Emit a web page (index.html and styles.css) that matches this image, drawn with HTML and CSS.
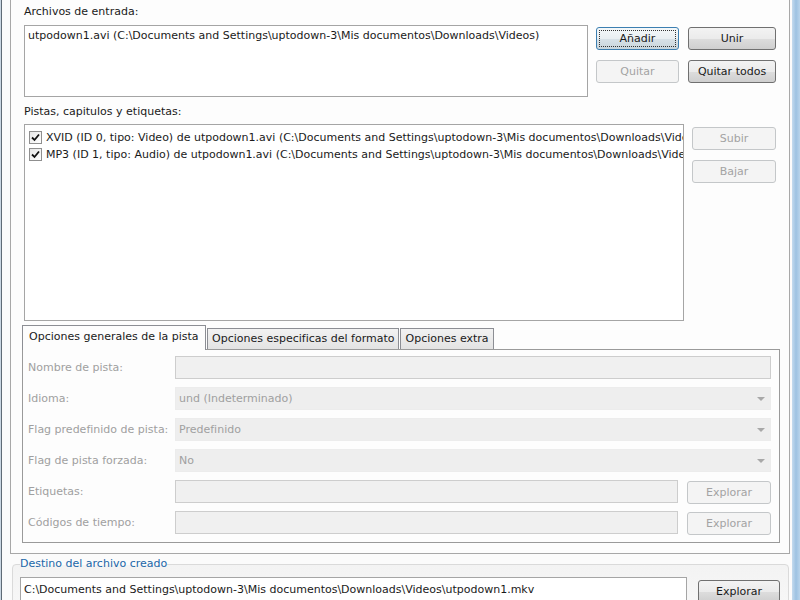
FILE: index.html
```html
<!DOCTYPE html>
<html lang="es">
  <head>
    <meta charset="UTF-8" />
    <title>mkvmerge GUI</title>
    <link rel="stylesheet" href="styles.css">
  </head>
  <body>
    <div class="window">
      <div class="page">
        <div class="section-label">Archivos de entrada:</div>
        <div class="files-row">
          <div class="listbox files">
            <div class="file-item">utpodown1.avi (C:\Documents and Settings\uptodown-3\Mis documentos\Downloads\Videos)</div>
          </div>
          <div class="btn-grid">
            <button class="btn focused">Añadir</button>
            <button class="btn">Unir</button>
            <button class="btn" disabled>Quitar</button>
            <button class="btn">Quitar todos</button>
          </div>
        </div>

        <div class="section-label second">Pistas, capitulos y etiquetas:</div>
        <div class="tracks-row">
          <div class="listbox tracks">
            <div class="track">
              <span class="check"><svg width="9" height="9" viewBox="0 0 9 9"><path d="M1 4.5 L3.5 7 L8 1.5" fill="none" stroke="#111" stroke-width="1.8"/></svg></span>
              XVID (ID 0, tipo: Video) de utpodown1.avi (C:\Documents and Settings\uptodown-3\Mis documentos\Downloads\Videos)
            </div>
            <div class="track">
              <span class="check"><svg width="9" height="9" viewBox="0 0 9 9"><path d="M1 4.5 L3.5 7 L8 1.5" fill="none" stroke="#111" stroke-width="1.8"/></svg></span>
              MP3 (ID 1, tipo: Audio) de utpodown1.avi (C:\Documents and Settings\uptodown-3\Mis documentos\Downloads\Videos)
            </div>
          </div>
          <div class="btn-col">
            <button class="btn" disabled>Subir</button>
            <button class="btn" disabled>Bajar</button>
          </div>
        </div>

        <div class="tabs">
          <div class="tab-bar">
            <div class="tab active">Opciones generales de la pista</div>
            <div class="tab">Opciones especificas del formato</div>
            <div class="tab">Opciones extra</div>
          </div>
          <div class="tab-panel">
            <div class="opt-label">Nombre de pista:</div>
            <div class="field"></div>

            <div class="opt-label">Idioma:</div>
            <div class="field select">und (Indeterminado)<span class="arrow"></span></div>

            <div class="opt-label">Flag predefinido de pista:</div>
            <div class="field select">Predefinido<span class="arrow"></span></div>

            <div class="opt-label">Flag de pista forzada:</div>
            <div class="field select">No<span class="arrow"></span></div>

            <div class="opt-label">Etiquetas:</div>
            <div class="field-row">
              <div class="field"></div>
              <button class="btn" disabled>Explorar</button>
            </div>

            <div class="opt-label">Códigos de tiempo:</div>
            <div class="field-row">
              <div class="field"></div>
              <button class="btn" disabled>Explorar</button>
            </div>
          </div>
        </div>
      </div>

      <fieldset class="dest">
        <legend>Destino del archivo creado</legend>
        <div class="dest-row">
          <div class="dest-input">C:\Documents and Settings\uptodown-3\Mis documentos\Downloads\Videos\utpodown1.mkv</div>
          <button class="btn">Explorar</button>
        </div>
      </fieldset>
    </div>
  </body>
</html>
```

FILE: styles.css
```css
* {
  box-sizing: border-box;
}
body {
  margin: 0;
  font-family: "DejaVu Sans", Verdana, sans-serif;
  font-size: 11px;
  color: #1a1a1a;
}
.window {
  width: 800px;
  height: 600px;
  overflow: hidden;
  padding: 0 11px 0 10px;
  background: linear-gradient(to right, #c9d6e2 0, #c9d6e2 1px, #5f6b76 1px, #5f6b76 2px, #fbfbfb 2px, #fbfbfb 792px, #c5dbee 792px, #9dc2e2 796px, #b9d4eb 800px);
}
.page {
  width: 780px;
  border: 1px solid #a8a8a8;
  border-top: none;
  padding: 5px 13px 10px 13px;
  background-color: #fdfdfd;
}
.section-label {
  line-height: 14px;
  margin-bottom: 6px;
}
.section-label.second {
  margin-top: 8px;
  margin-bottom: 5px;
}
.files-row {
  display: flex;
  gap: 8px;
}
.listbox {
  border: 1px solid #a5a5a5;
  background-color: #ffffff;
  overflow: hidden;
}
.files {
  width: 564px;
  height: 72px;
  padding: 3px 3px;
  line-height: 14px;
}
.btn-grid {
  display: grid;
  grid-template-columns: 83px 88px;
  grid-auto-rows: 23px;
  column-gap: 9px;
  row-gap: 10px;
  padding-top: 2px;
}
.btn {
  font-family: inherit;
  font-size: 11px;
  color: #1a1a1a;
  height: 23px;
  padding: 0;
  border: 1px solid #707070;
  border-radius: 3px;
  background: linear-gradient(#f3f3f3 0%, #ebebeb 50%, #dddddd 51%, #cfcfcf 100%);
}
.btn.focused {
  border-color: #3c7fb1;
  outline: 1px dotted #333;
  outline-offset: -4px;
  background: linear-gradient(#f4f8fa 0%, #e9eff2 50%, #d8e2e8 51%, #c9d5db 100%);
}
.btn:disabled {
  color: #a3a3a3;
  border-color: #c4c7c9;
  background: #f4f4f4;
}
.tracks-row {
  display: flex;
  gap: 8px;
}
.tracks {
  width: 660px;
  height: 197px;
  padding: 4px 2px 0 4px;
}
.track {
  display: flex;
  align-items: center;
  height: 17px;
  white-space: nowrap;
}
.check {
  flex: none;
  width: 13px;
  height: 13px;
  margin-right: 4px;
  border: 1px solid #8f8f8f;
  background: linear-gradient(135deg, #e6e6e6, #ffffff);
  display: flex;
  align-items: center;
  justify-content: center;
}
.btn-col {
  display: flex;
  flex-direction: column;
  gap: 10px;
  width: 84px;
  padding-top: 3px;
}
.tabs {
  margin: 4px -4px 0 -2px;
}
.tab-bar {
  display: flex;
  align-items: flex-end;
  height: 24px;
  position: relative;
  z-index: 1;
}
.tab {
  height: 21px;
  line-height: 19px;
  padding: 0 4px;
  border: 1px solid #8c8e94;
  border-bottom: none;
  background: linear-gradient(#f2f2f2, #e3e3e3);
  white-space: nowrap;
}
.tab + .tab {
  margin-left: 1px;
}
.tab.active {
  height: 25px;
  width: 184px;
  line-height: 22px;
  padding: 0 6px;
  background: #fdfdfd;
  margin-bottom: -1px;
}
.tab-panel {
  border: 1px solid #9a9a9a;
  height: 194px;
  padding: 6px 8px 0 5px;
  background-color: #fdfdfd;
  display: grid;
  grid-template-columns: 147px 1fr;
  grid-auto-rows: 23px;
  row-gap: 8px;
  align-items: center;
}
.opt-label {
  color: #a0a0a0;
}
.field {
  height: 23px;
  border: 1px solid #cdcdcd;
  background-color: #f0f0f0;
  color: #a0a0a0;
  line-height: 21px;
  padding: 0 3px;
  position: relative;
}
.field.select {
  border-color: #ececec;
  background-color: #eeeeee;
}
.arrow {
  position: absolute;
  right: 5px;
  top: 9px;
  border-left: 4px solid transparent;
  border-right: 4px solid transparent;
  border-top: 4px solid #a8a8a8;
}
.field-row {
  display: flex;
  gap: 9px;
}
.field-row .field {
  flex: 1;
}
.field-row .btn {
  width: 84px;
  margin-top: 1px;
}
.dest {
  margin: 3px 0 0 2px;
  width: 776px;
  border: 1px solid #dadada;
  border-radius: 4px;
  padding: 0 8px 10px 7px;
  background: linear-gradient(#f3f3f3, #f8f8f8);
}
.dest legend {
  color: #2166a8;
  padding: 0;
  line-height: 14px;
}
.dest-row {
  display: flex;
  gap: 11px;
  margin-top: 6px;
}
.dest-input {
  width: 667px;
  height: 25px;
  border: 1px solid #a5a5a5;
  background-color: #ffffff;
  line-height: 23px;
  padding: 0 3px;
  white-space: nowrap;
}
.dest-row .btn {
  width: 82px;
  margin-top: 3px;
}
```
